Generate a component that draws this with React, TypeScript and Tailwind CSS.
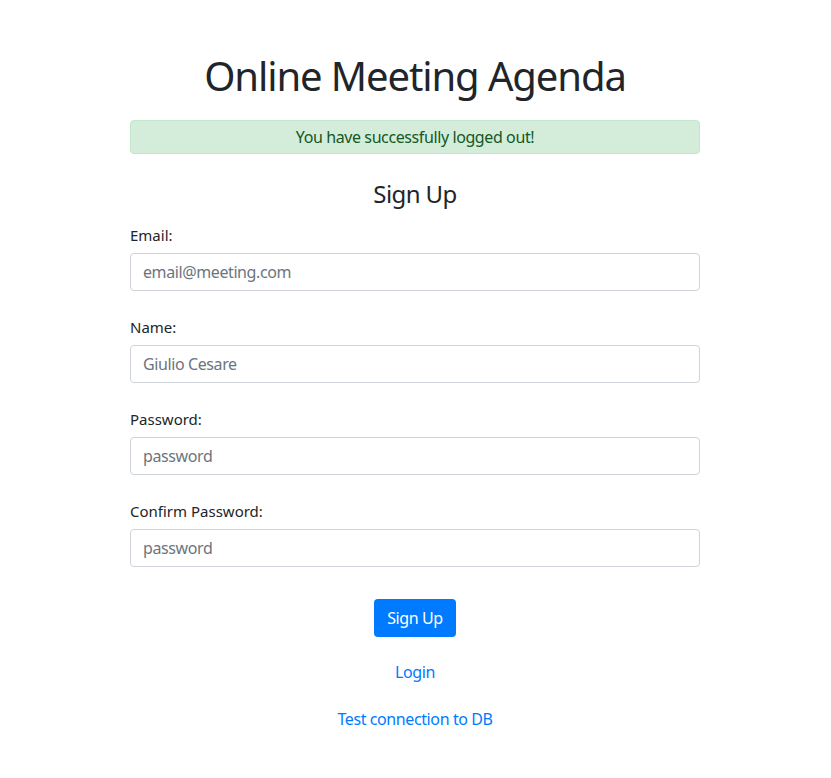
import { useState } from 'react'

type Field = {
  id: string
  label: string
  type: string
  placeholder: string
}

const fields: Field[] = [
  { id: 'email', label: 'Email:', type: 'email', placeholder: 'email@meeting.com' },
  { id: 'name', label: 'Name:', type: 'text', placeholder: 'Giulio Cesare' },
  { id: 'password', label: 'Password:', type: 'password', placeholder: 'password' },
  { id: 'confirm', label: 'Confirm Password:', type: 'password', placeholder: 'password' },
]

const App = () => {
  const [values, setValues] = useState<Record<string, string>>({})

  return (
    <div className="min-h-screen bg-white text-[#212529] font-['Noto_Sans',sans-serif] pl-[130px]">
      <div className="w-[570px] pt-[52px]">
        <h1 className="text-center text-[40px] leading-[48px] font-normal tracking-[-1.1px]">Online Meeting Agenda</h1>

        <div className="mt-[20px] py-[4px] border border-[#c3e6cb] bg-[#d4edda] rounded text-center text-[#155724] text-base leading-6 tracking-[-0.4px]">
          You have successfully logged out!
        </div>

        <h3 className="mt-[25px] text-center text-[24px] leading-[29px] font-normal tracking-[-0.6px]">Sign Up</h3>

        <form className="mt-[15px]" onSubmit={(e) => e.preventDefault()}>
          {fields.map((f, i) => (
            <div key={f.id} className={i > 0 ? 'mt-[24px]' : ''}>
              <label htmlFor={f.id} className="block text-[15px] leading-6 mb-[6px]">{f.label}</label>
              <input
                id={f.id}
                type={f.type}
                placeholder={f.placeholder}
                value={values[f.id] || ''}
                onChange={(e) => setValues({ ...values, [f.id]: e.target.value })}
                className="block w-full h-[38px] px-3 border border-[#ced4da] rounded text-base tracking-[-0.4px] text-[#495057] placeholder:text-[#6c757d] outline-none"
              />
            </div>
          ))}

          <div className="mt-[32px] flex justify-center">
            <button type="submit" className="h-[38px] w-[82px] bg-[#007bff] text-white text-base tracking-[-0.4px] rounded">Sign Up</button>
          </div>
        </form>

        <div className="mt-[23px] text-center leading-6 tracking-[-0.4px]">
          <a href="#" className="text-[#007bff]">Login</a>
        </div>
        <div className="mt-[23px] text-center leading-6 tracking-[-0.4px]">
          <a href="#" className="text-[#007bff]">Test connection to DB</a>
        </div>
      </div>
    </div>
  )
}

export default App
